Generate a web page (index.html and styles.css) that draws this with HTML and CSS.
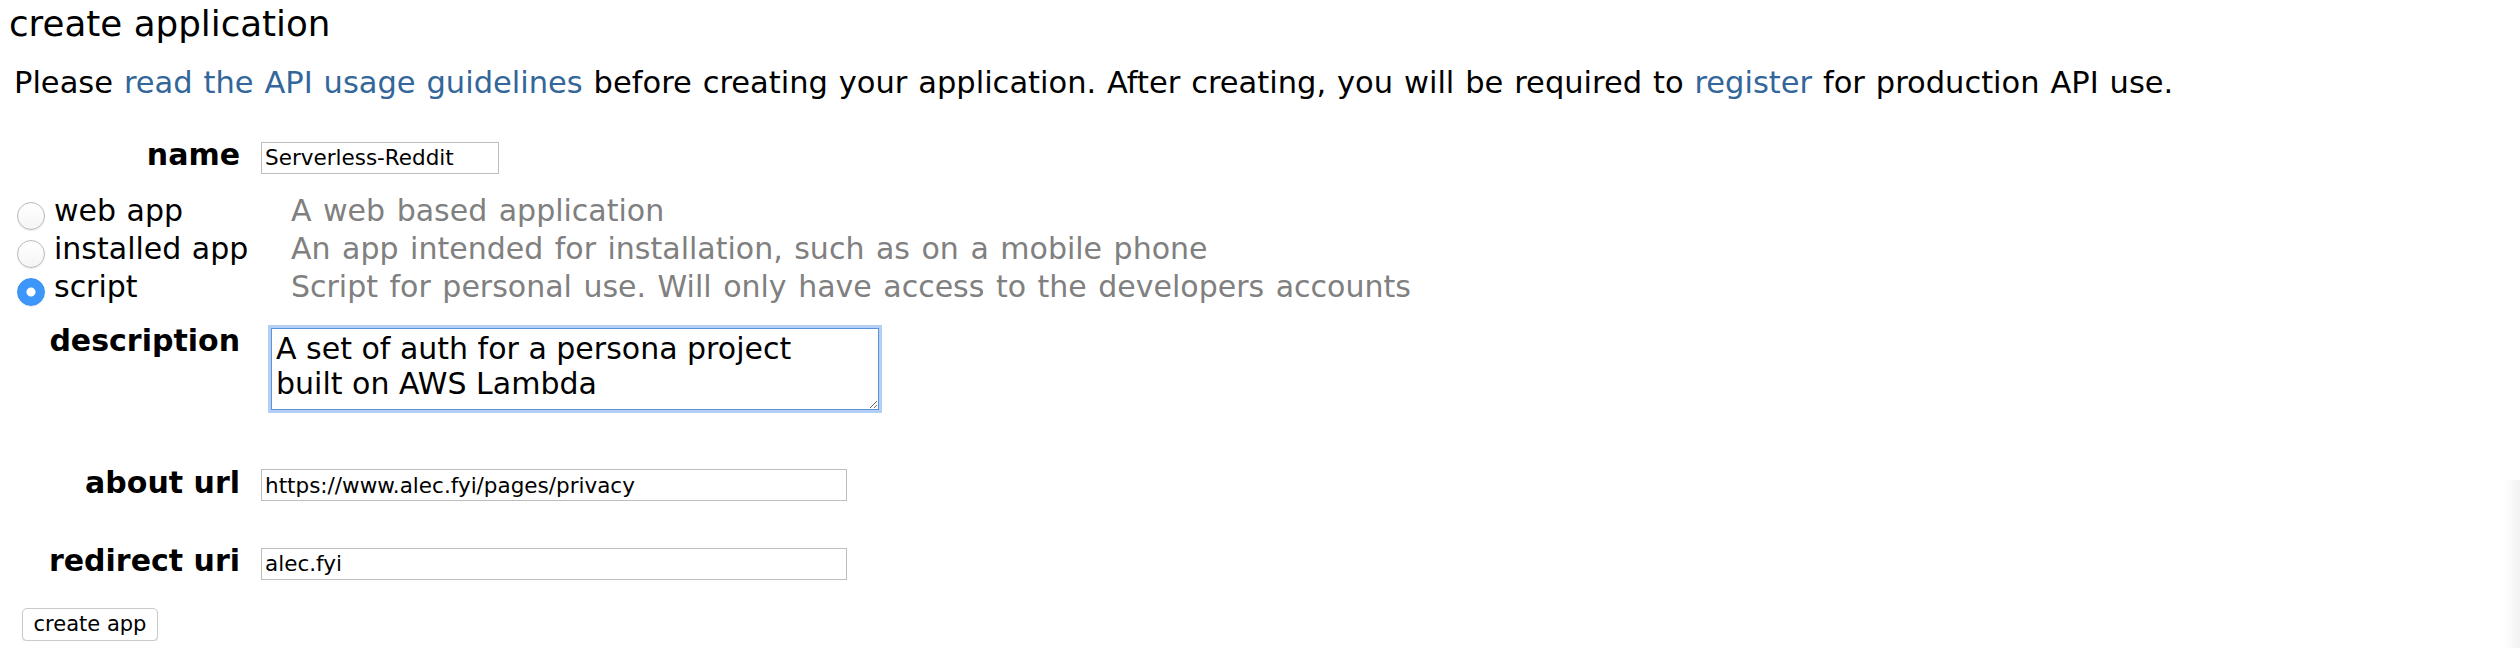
FILE: index.html
```html
<!DOCTYPE html>
<html lang="en">
<head>
<meta charset="utf-8">
<title>create application</title>
<link rel="stylesheet" href="styles.css">
</head>
<body>
<div class="page">
  <h1 class="title">create application</h1>
  <p class="intro">Please <a href="#">read the API usage guidelines</a> before creating your application. After creating, you will be required to <a href="#">register</a> for production API use.</p>
  <form class="form">
    <div class="row">
      <label class="label" for="name">name</label>
      <input id="name" class="field field-short" type="text" value="Serverless-Reddit">
    </div>
    <div class="types">
      <label class="type"><input class="radio" type="radio" name="apptype">web app</label>
      <span class="type-desc">A web based application</span>
      <label class="type"><input class="radio" type="radio" name="apptype">installed app</label>
      <span class="type-desc">An app intended for installation, such as on a mobile phone</span>
      <label class="type"><input class="radio" type="radio" name="apptype" checked>script</label>
      <span class="type-desc">Script for personal use. Will only have access to the developers accounts</span>
    </div>
    <div class="row row-desc">
      <label class="label" for="desc">description</label>
      <textarea id="desc" class="area">A set of auth for a persona project
built on AWS Lambda</textarea>
    </div>
    <div class="row row-about">
      <label class="label" for="about">about url</label>
      <input id="about" class="field field-long" type="text" value="https://www.alec.fyi/pages/privacy">
    </div>
    <div class="row row-redirect">
      <label class="label" for="redirect">redirect uri</label>
      <input id="redirect" class="field field-long" type="text" value="alec.fyi">
    </div>
    <button class="submit" type="button">create app</button>
  </form>
</div>
<div class="scroll-edge"></div>
</body>
</html>
```

FILE: styles.css
```css
html, body {
  margin: 0;
  padding: 0;
  background: #fff;
}

body {
  font-family: "DejaVu Sans", Verdana, sans-serif;
  color: #000;
}

.page {
  padding: 0;
}

.title {
  margin: 3px 0 0 9px;
  font-size: 35.7px;
  line-height: 41px;
  font-weight: normal;
}

.intro {
  margin: 21px 0 0 14px;
  font-size: 30.5px;
  line-height: 35px;
  word-spacing: 1.2px;
}

.intro a {
  color: #369;
  text-decoration: none;
}

.form {
  margin: 37px 0 0 0;
  font-size: 30px;
  line-height: 35px;
}

.row {
  display: grid;
  grid-template-columns: 240px auto;
  column-gap: 21px;
  align-items: baseline;
  justify-content: start;
}

.label {
  font-weight: bold;
  text-align: right;
}

.field {
  font-family: "DejaVu Sans", Verdana, sans-serif;
  font-size: 21.5px;
  height: 32px;
  box-sizing: border-box;
  border: 1px solid #bdbdbd;
  padding: 0 3px;
  margin: 0;
  color: #000;
  background: #fff;
  outline: none;
}

.field-short {
  width: 238px;
}

.field-long {
  width: 586px;
}

.types {
  display: grid;
  grid-template-columns: 274px auto;
  justify-content: start;
  margin: 18px 0 0 17px;
  line-height: 37px;
}

.type {
  word-spacing: 1px;
}

.radio {
  appearance: none;
  -webkit-appearance: none;
  width: 28px;
  height: 28px;
  margin: 0 9px 0 0;
  vertical-align: -9px;
  border-radius: 50%;
  border: 1px solid #b9b9b9;
  box-sizing: border-box;
  background: linear-gradient(#ffffff, #f5f5f5);
  box-shadow: 0 1px 1px rgba(0, 0, 0, 0.08);
}

.radio:checked {
  border-color: #3b8ff0;
  background: radial-gradient(circle, #fff 0, #fff 4px, #3d97fb 5px);
}

.type-desc {
  color: #808080;
  word-spacing: 2px;
}

.row-desc {
  margin-top: 17px;
  align-items: start;
}

.area {
  margin: 5px 0 0 10px;
  width: 608px;
  height: 82px;
  box-sizing: border-box;
  font-family: "DejaVu Sans", Verdana, sans-serif;
  font-size: 30px;
  line-height: 35px;
  padding: 2px 4px;
  border: 1px solid #5b93d8;
  box-shadow: 0 0 0 3px rgba(118, 168, 236, 0.55);
  outline: none;
  resize: both;
  overflow: hidden;
  color: #000;
}

.row-about {
  margin-top: 55px;
}

.row-redirect {
  margin-top: 42px;
}

.submit {
  display: block;
  margin: 28px 0 0 22px;
  width: 136px;
  height: 33px;
  padding: 0;
  font-family: "DejaVu Sans", Verdana, sans-serif;
  font-size: 21px;
  color: #000;
  background: #fff;
  border: 1px solid #cacaca;
  border-radius: 5px;
  box-shadow: 0 1px 1px rgba(0, 0, 0, 0.15);
}

.scroll-edge {
  position: fixed;
  right: 0;
  top: 480px;
  bottom: 0;
  width: 16px;
  background: linear-gradient(to right, rgba(0, 0, 0, 0), rgba(0, 0, 0, 0.05));
}
```
